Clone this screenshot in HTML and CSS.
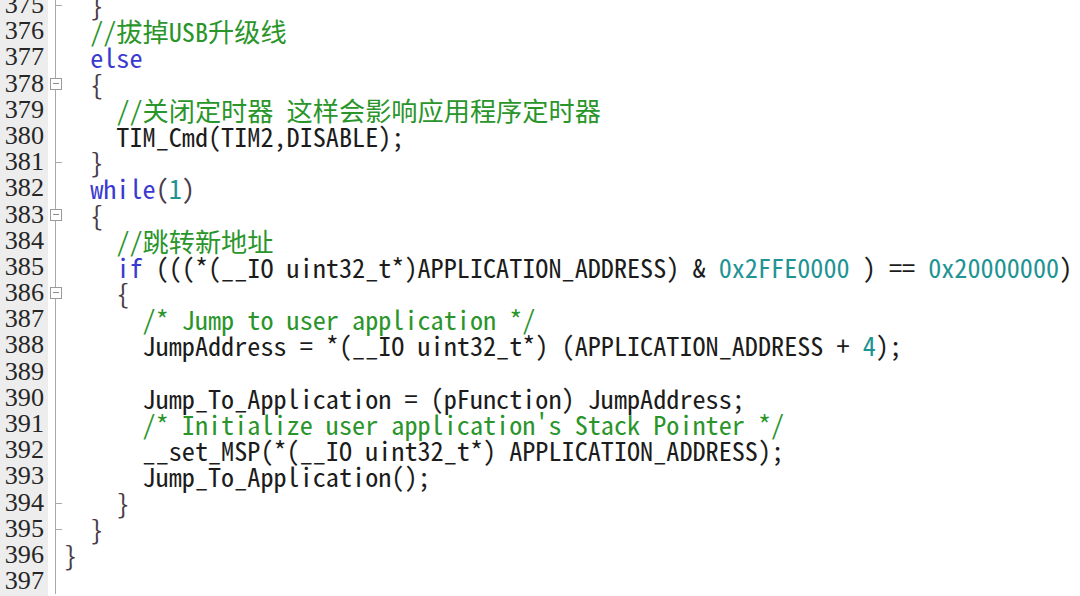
FILE: index.html
```html
<!DOCTYPE html>
<html lang="zh-CN">
<head>
<meta charset="utf-8">
<title>Keil editor</title>
<link rel="stylesheet" href="styles.css">
</head>
<body>
<div class="editor">
  <div class="lines">
    <div class="line"><span class="num">375</span><span class="fold tick"></span><span class="code">  <span class="br">}</span></span></div>
    <div class="line"><span class="num">376</span><span class="fold"></span><span class="code">  <span class="cm">//拔掉USB升级线</span></span></div>
    <div class="line"><span class="num">377</span><span class="fold"></span><span class="code">  <span class="kw">else</span></span></div>
    <div class="line"><span class="num">378</span><span class="fold box"></span><span class="code">  <span class="br">{</span></span></div>
    <div class="line"><span class="num">379</span><span class="fold"></span><span class="code">    <span class="cm">//关闭定时器 这样会影响应用程序定时器</span></span></div>
    <div class="line"><span class="num">380</span><span class="fold"></span><span class="code">    TIM_Cmd(TIM2,DISABLE);</span></div>
    <div class="line"><span class="num">381</span><span class="fold tick"></span><span class="code">  <span class="br">}</span></span></div>
    <div class="line"><span class="num">382</span><span class="fold"></span><span class="code">  <span class="kw">while</span><span class="br">(</span><span class="nm">1</span><span class="br">)</span></span></div>
    <div class="line"><span class="num">383</span><span class="fold box"></span><span class="code">  <span class="br">{</span></span></div>
    <div class="line"><span class="num">384</span><span class="fold"></span><span class="code">    <span class="cm">//跳转新地址</span></span></div>
    <div class="line"><span class="num">385</span><span class="fold"></span><span class="code">    <span class="kw">if</span> (((*(__IO uint32_t*)APPLICATION_ADDRESS) &amp; <span class="nm">0x2FFE0000</span> ) == <span class="nm">0x20000000</span>)</span></div>
    <div class="line"><span class="num">386</span><span class="fold box"></span><span class="code">    <span class="br">{</span></span></div>
    <div class="line"><span class="num">387</span><span class="fold"></span><span class="code">      <span class="cm">/* Jump to user application */</span></span></div>
    <div class="line"><span class="num">388</span><span class="fold"></span><span class="code">      JumpAddress = *(__IO uint32_t*) (APPLICATION_ADDRESS + <span class="nm">4</span>);</span></div>
    <div class="line"><span class="num">389</span><span class="fold"></span><span class="code"></span></div>
    <div class="line"><span class="num">390</span><span class="fold"></span><span class="code">      Jump_To_Application = (pFunction) JumpAddress;</span></div>
    <div class="line"><span class="num">391</span><span class="fold"></span><span class="code">      <span class="cm">/* Initialize user application's Stack Pointer */</span></span></div>
    <div class="line"><span class="num">392</span><span class="fold"></span><span class="code">      __set_MSP(*(__IO uint32_t*) APPLICATION_ADDRESS);</span></div>
    <div class="line"><span class="num">393</span><span class="fold"></span><span class="code">      Jump_To_Application();</span></div>
    <div class="line"><span class="num">394</span><span class="fold tick"></span><span class="code">    <span class="br">}</span></span></div>
    <div class="line"><span class="num">395</span><span class="fold tick"></span><span class="code">  <span class="br">}</span></span></div>
    <div class="line"><span class="num">396</span><span class="fold"></span><span class="code"><span class="br">}</span></span></div>
    <div class="line"><span class="num">397</span><span class="fold"></span><span class="code"></span></div>
  </div>
</div>
</body>
</html>
```
FILE: styles.css
```css
html, body {
  margin: 0;
  padding: 0;
  background: #ffffff;
}

.editor {
  width: 1080px;
  height: 596px;
  overflow: hidden;
  background: linear-gradient(to right, #ededed 0, #ededed 48px, #ffffff 48px);
}

.lines {
  margin-top: -8px;
}

.line {
  display: grid;
  grid-template-columns: 48px 16px 1fr;
  height: 26.2px;
}

.num {
  font-family: "Liberation Serif", serif;
  font-size: 26.2px;
  line-height: 26.2px;
  color: #262626;
  text-align: right;
  padding-right: 4px;
  background: #ededed;
}

.fold {
  position: relative;
  background: linear-gradient(to right, transparent 7px, #a9a9a9 7px, #a9a9a9 8px, transparent 8px);
}

.fold.box::before {
  content: "";
  position: absolute;
  left: 2px;
  top: 7px;
  width: 10px;
  height: 10px;
  border: 1px solid #9a9a9a;
  background: #ffffff;
}

.fold.box::after {
  content: "";
  position: absolute;
  left: 5px;
  top: 12px;
  width: 6px;
  height: 1px;
  background: #8a8a8a;
}

.fold.tick::after {
  content: "";
  position: absolute;
  left: 8px;
  top: 13px;
  width: 6px;
  height: 1px;
  background: #a9a9a9;
}

.code {
  font-family: "Noto Sans Mono CJK SC", "Noto Sans CJK SC", monospace;
  font-size: 26.2px;
  line-height: 26.2px;
  color: #1c1c1c;
  white-space: pre;
}

.cm { color: #2a952a; }
.kw { color: #3a3ad0; }
.nm { color: #1f9494; }
.br { color: #4a3c48; }
```
